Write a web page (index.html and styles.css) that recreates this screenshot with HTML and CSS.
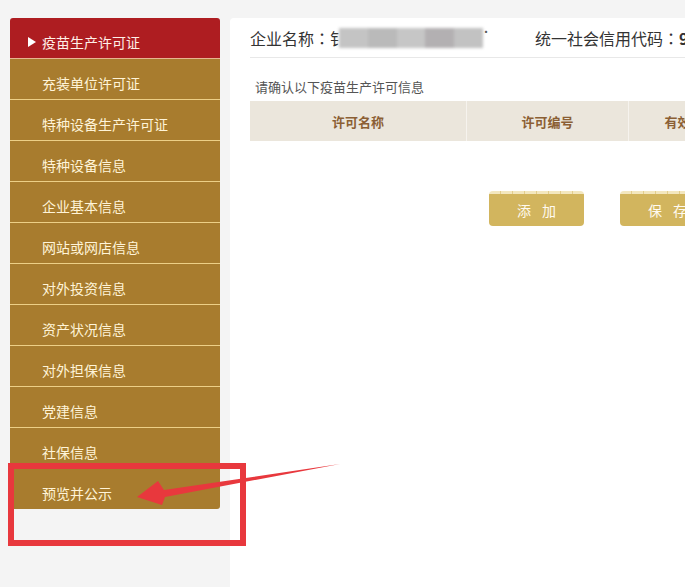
FILE: index.html
```html
<!DOCTYPE html>
<html lang="zh-CN">
<head>
<meta charset="utf-8">
<title>疫苗生产许可证</title>
<link rel="stylesheet" href="styles.css">
</head>
<body>
<div class="page">
  <nav class="sidebar">
    <div class="item active"><span class="tri"></span>疫苗生产许可证</div>
    <div class="item">充装单位许可证</div>
    <div class="item">特种设备生产许可证</div>
    <div class="item">特种设备信息</div>
    <div class="item">企业基本信息</div>
    <div class="item">网站或网店信息</div>
    <div class="item">对外投资信息</div>
    <div class="item">资产状况信息</div>
    <div class="item">对外担保信息</div>
    <div class="item">党建信息</div>
    <div class="item">社保信息</div>
    <div class="item last">预览并公示</div>
  </nav>
  <main class="main">
    <div class="head">
      <div class="field name"><span>企业名称</span><span class="colon">：</span><span class="clip">钅</span><span class="blur"><i class="b1"></i><i class="b2"></i><i class="b3"></i><i class="b4"></i><i class="b5"></i></span><span class="tick">˙</span></div>
      <div class="field code">统一社会信用代码<span class="colon">：</span><b>9</b></div>
    </div>
    <p class="hint">请确认以下疫苗生产许可信息</p>
    <div class="table">
      <div class="th c1">许可名称</div>
      <div class="th c2">许可编号</div>
      <div class="th c3">有效期</div>
    </div>
    <div class="actions">
      <button class="btn">添 加</button>
      <button class="btn">保 存</button>
    </div>
  </main>
</div>
<svg class="mark" width="685" height="587" viewBox="0 0 685 587">
  <rect x="11" y="466" width="232" height="77" fill="none" stroke="#e8383d" stroke-width="6"/>
  <polygon points="340,464 164,490 158,481 137,497 162,505 165,497" fill="#e8383d"/>
</svg>
</body>
</html>
```
FILE: styles.css
```css
html, body {
  margin: 0;
  padding: 0;
  width: 685px;
  height: 587px;
  overflow: hidden;
  background: #f4f4f4;
  font-family: "Noto Sans CJK SC", "Noto Sans", sans-serif;
}
.page {
  display: flex;
  gap: 10px;
  padding: 18px 0 0 10px;
  height: 569px;
}
.sidebar {
  width: 210px;
  flex: none;
  display: flex;
  flex-direction: column;
}
.item {
  box-sizing: border-box;
  height: 41px;
  padding-top: 7px;
  border-bottom: 1px solid #edcf86;
  background: #a87c2e;
  color: #fff4d8;
  font-size: 14px;
  padding-left: 32px;
  display: flex;
  align-items: center;
}
.item.active {
  background: #ae1d21;
  border-radius: 3px 3px 0 0;
  color: #fff0e8;
  padding-left: 18px;
  gap: 6px;
  border-bottom-color: #e8b490;
}
.item.last {
  border-bottom: none;
  height: 40px;
  border-radius: 0 0 3px 3px;
}
.tri {
  width: 0;
  height: 0;
  border-left: 8px solid #ffffff;
  border-top: 5px solid transparent;
  border-bottom: 5px solid transparent;
}
.main {
  flex: 1;
  background: #ffffff;
  border-radius: 4px 0 0 0;
  padding-left: 20px;
  min-width: 0;
  overflow: hidden;
}
.head {
  height: 39px;
  border-bottom: 1px solid #e8e8e8;
  display: flex;
  align-items: center;
  gap: 44px;
  font-size: 16px;
  color: #333333;
  white-space: nowrap;
}
.field {
  display: flex;
  align-items: center;
}
.colon {
  font-family: "Noto Sans CJK JP", sans-serif;
}
.clip {
  display: inline-block;
  width: 9px;
  overflow: hidden;
}
.blur {
  display: flex;
  width: 144px;
  height: 20px;
  filter: blur(1.5px);
}
.blur i { flex: 1; height: 100%; }
.blur .b1 { background: #c4c4c4; }
.blur .b2 { background: #bababa; }
.blur .b3 { background: #c6c6c6; }
.blur .b4 { background: #b3b0b2; }
.blur .b5 { background: #c2c2c2; }
.tick {
  width: 8px;
  color: #555555;
  margin-top: -12px;
  font-size: 12px;
}
.code b { font-weight: 700; }
.hint {
  margin: 20px 0 0 5px;
  height: 22px;
  font-size: 13px;
  line-height: 18px;
  color: #555555;
}
.table {
  display: flex;
  width: 600px;
  height: 40px;
  margin-top: 1px;
  background: #ebe6dc;
}
.th {
  font-size: 13px;
  font-weight: 700;
  color: #8b5f34;
  display: flex;
  align-items: center;
  justify-content: center;
  border-right: 1px solid #f6f3ee;
}
.c1 { width: 216px; }
.c2 { width: 161px; }
.c3 { width: 110px; }
.actions {
  display: flex;
  gap: 36px;
  margin: 50px 0 0 239px;
  width: 400px;
}
.btn {
  flex: none;
  width: 95px;
  height: 35px;
  border: none;
  border-radius: 4px;
  background:
    repeating-linear-gradient(90deg, #f3e7bf 0 11px, #e2cd8d 11px 12px) top / 100% 3px no-repeat,
    #d2b55e;
  color: #fffaf0;
  font-family: "Noto Sans CJK SC", sans-serif;
  font-size: 14px;
  letter-spacing: 4px;
  padding: 2px 0 0 4px;
}
.mark {
  position: absolute;
  left: 0;
  top: 0;
  pointer-events: none;
}
```
